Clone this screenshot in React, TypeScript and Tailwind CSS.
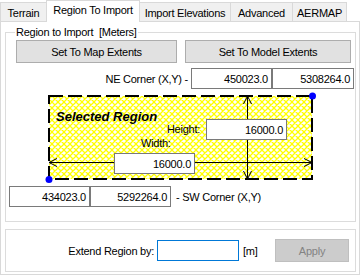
import React from "react";

const font = "font-['Liberation_Sans',Arial,sans-serif]";

function Tab({ label, w, active }: { label: string; w: string; active?: boolean }) {
  if (active) {
    return (
      <div
        className={`${w} h-[22px] -mb-px -ml-px relative z-10 bg-white border border-b-0 border-[#d9d9d9] flex items-center justify-center pb-[3px]`}
      >
        {label}
      </div>
    );
  }
  return (
    <div
      className={`${w} h-[19px] -ml-px first:ml-0 bg-[#f0f0f0] border border-b-0 border-[#d9d9d9] flex items-center justify-center pt-[1px]`}
    >
      {label}
    </div>
  );
}

function TextBox({ value, w, className = "" }: { value: string; w: string; className?: string }) {
  return (
    <div
      className={`${w} h-[21px] bg-white border border-[#7a7a7a] flex items-center justify-end pr-[3px] ${className}`}
    >
      {value}
    </div>
  );
}

function RegionDrawing() {
  return (
    <svg className="absolute inset-0" width="280" height="94" viewBox="0 0 280 94">
      <defs>
        <pattern id="hatch" width="6" height="6" patternUnits="userSpaceOnUse">
          <rect width="6" height="6" fill="#ffffff" />
          <path d="M-1,-1 L7,7 M-1,5 L1,7 M5,-1 L7,1 M7,-1 L-1,7 M1,-1 L-1,1 M7,5 L5,7" stroke="#ffff00" strokeWidth="1.25" />
        </pattern>
      </defs>
      <rect x="9" y="6" width="263" height="83" fill="url(#hatch)" />
      <rect x="9" y="6" width="263" height="83" fill="none" stroke="#000" strokeWidth="2" strokeDasharray="14 5" />
      <g stroke="#000" strokeWidth="1" fill="none">
        <line x1="207.5" y1="6" x2="207.5" y2="89" />
        <polyline points="203.5,14 207.5,6 211.5,14" />
        <polyline points="203.5,81 207.5,89 211.5,81" />
        <line x1="9" y1="72.5" x2="272" y2="72.5" />
        <polyline points="17,68.5 9,72.5 17,76.5" />
        <polyline points="264,68.5 272,72.5 264,76.5" />
      </g>
      <circle cx="272.5" cy="6" r="3.5" fill="#0000ff" />
      <circle cx="9" cy="89.5" r="3.5" fill="#0000ff" />
    </svg>
  );
}

export default function App() {
  return (
    <div className={`w-[362px] h-[275px] bg-white text-[11px] leading-[14px] text-black tracking-[-0.25px] ${font} overflow-hidden`}>
      <div className="h-[21px] flex items-end">
        <Tab label="Terrain" w="w-[47px]" />
        <Tab label="Region To Import" w="w-[94px]" active />
        <Tab label="Import Elevations" w="w-[92px]" />
        <Tab label="Advanced" w="w-[63px]" />
        <Tab label="AERMAP" w="w-[55px]" />
      </div>

      <div className="w-[360px] h-[254px] border border-[#d9d9d9] bg-white">
        {/* Region to Import group */}
        <div className="relative ml-[4px] mt-[10px] w-[351px] h-[190px] border border-[#dcdcdc]">
          <span className="absolute left-[9px] -top-[8px] px-[1px] bg-white whitespace-pre">
            Region to Import  [Meters]
          </span>

          <div className="flex mt-[7px] ml-[10px] gap-[8px]">
            <button className="w-[161px] h-[23px] bg-[#e1e1e1] border border-[#adadad]">Set To Map Extents</button>
            <button className="w-[166px] h-[23px] bg-[#e1e1e1] border border-[#adadad]">Set To Model Extents</button>
          </div>

          <div className="flex items-center mt-[5px]">
            <div className="w-[182px] text-right">NE Corner (X,Y) -</div>
            <TextBox value="450023.0" w="w-[81px]" className="ml-[3px]" />
            <TextBox value="5308264.0" w="w-[82px]" />
          </div>

          <div className="relative mt-[1px] ml-[34px] w-[280px] h-[94px]">
            <RegionDrawing />
            <div className="absolute left-[16px] top-[19px] text-[13px] leading-[16px] font-bold italic tracking-normal">
              Selected Region
            </div>
            <div className="absolute left-[100px] w-[60px] top-[32px] text-right">Height:</div>
            <TextBox value="16000.0" w="w-[81px]" className="absolute left-[166px] top-[29px]" />
            <div className="absolute left-[101px] top-[46px]">Width:</div>
            <TextBox value="16000.0" w="w-[81px]" className="absolute left-[74px] top-[63px]" />
          </div>

          <div className="flex items-center mt-[2px] ml-[3px]">
            <TextBox value="434023.0" w="w-[81px]" />
            <TextBox value="5292264.0" w="w-[81px]" />
            <div className="ml-[5px]">- SW Corner (X,Y)</div>
          </div>
        </div>

        {/* Extend region group */}
        <div className="ml-[4px] mt-[7px] w-[351px] h-[43px] border border-[#dcdcdc] flex items-center">
          <div className="w-[148px] text-right">Extend Region by:</div>
          <div className="ml-[3px] w-[82px] h-[21px] bg-white border border-[#0078d7]" />
          <div className="ml-[4px]">[m]</div>
          <button className="ml-auto mr-[6px] w-[74px] h-[23px] bg-[#cccccc] border border-[#bfbfbf] text-[#838383]">
            Apply
          </button>
        </div>
      </div>
    </div>
  );
}
